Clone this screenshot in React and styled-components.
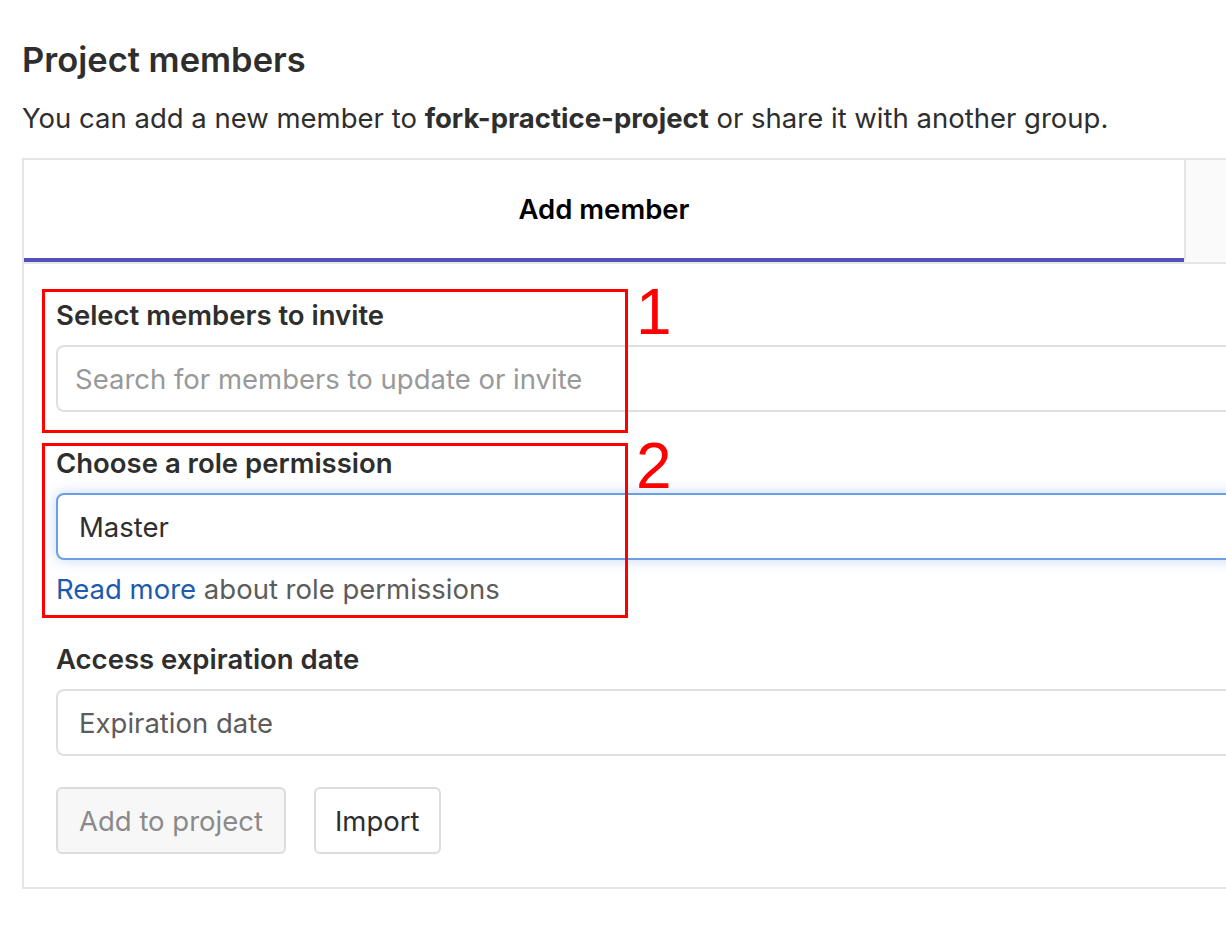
import React from "react";
import styled, { createGlobalStyle } from "styled-components";

const GlobalStyle = createGlobalStyle`
  html, body {
    margin: 0;
    padding: 0;
    background: #ffffff;
    overflow: hidden;
  }
  body {
    font-family: Inter, "Liberation Sans", Arial, sans-serif;
    color: #2e2e2e;
  }
`;

const Page = styled.div`
  padding: 38px 0 0 22px;
  width: 1400px;
`;

const Title = styled.h1`
  margin: 0;
  font-size: 34.5px;
  line-height: 44px;
  font-weight: 600;
  color: #2e2e2e;
`;

const Intro = styled.p`
  margin: 18px 0 0;
  font-size: 27.5px;
  line-height: 36px;
  color: #2e2e2e;

  strong {
    font-weight: 700;
  }
`;

const Card = styled.div`
  margin-top: 22px;
  border: 2px solid #e5e5e5;
  width: 1376px;
`;

const TabBar = styled.div`
  display: flex;
  border-bottom: 2px solid #e5e5e5;
`;

const Tab = styled.div`
  display: flex;
  align-items: center;
  justify-content: center;
  height: 98px;
  font-size: 27.5px;
  font-weight: 600;
  color: #000;
  background: ${(p) => (p.$active ? "#ffffff" : "#fafafa")};
  border-bottom: 4px solid ${(p) => (p.$active ? "#5450ba" : "transparent")};
  ${(p) => (p.$active ? "width: 1160px;" : "flex: 1; border-left: 2px solid #e5e5e5;")}
`;

const Body = styled.div`
  position: relative;
  padding: 36px 32px 33px;
`;

const Group = styled.div`
  margin-bottom: ${(p) => p.$gap || 36}px;
`;

const Label = styled.label`
  display: block;
  font-size: 27.5px;
  line-height: 30px;
  font-weight: 600;
  color: #2e2e2e;
  margin-bottom: 15px;
`;

const Field = styled.div`
  height: 63px;
  border: 2px solid ${(p) => (p.$focus ? "#6a9fe4" : "#dfdfdf")};
  border-radius: 8px;
  display: flex;
  align-items: center;
  padding: 0 ${(p) => (p.$pad ? p.$pad : 21)}px;
  font-size: 27.5px;
  color: ${(p) => p.$color || "#2e2e2e"};
  box-shadow: ${(p) => (p.$focus ? "0 0 14px rgba(90, 145, 225, 0.35)" : "none")};
  background: #fff;
`;

const Help = styled.p`
  margin: 14px 0 0;
  font-size: 27.5px;
  line-height: 30px;
  color: #5c5c5c;

  a {
    color: #1b5cb0;
    text-decoration: none;
  }
`;

const Actions = styled.div`
  display: flex;
  gap: 28px;
`;

const Button = styled.button`
  height: 67px;
  padding: 0 ${(p) => (p.$disabled ? 21 : 19)}px;
  border-radius: 6px;
  border: 2px solid #dcdcdc;
  background: ${(p) => (p.$disabled ? "#f7f7f7" : "#ffffff")};
  color: ${(p) => (p.$disabled ? "#8a8a8a" : "#2e2e2e")};
  font-family: inherit;
  font-size: 27.5px;
`;

const Mark = styled.div`
  position: absolute;
  left: 18px;
  top: ${(p) => p.$top}px;
  width: 580px;
  height: ${(p) => p.$h}px;
  border: 3px solid #ff0000;
`;

const MarkNumber = styled.span`
  position: absolute;
  left: 591px;
  top: -18px;
  font-size: 64px;
  line-height: 76px;
  color: #ff0000;
  font-family: "Liberation Sans", Arial, sans-serif;
`;

export default function App() {
  return (
    <>
      <GlobalStyle />
      <Page>
        <Title>Project members</Title>
        <Intro>
          You can add a new member to <strong>fork-practice-project</strong> or share it with another group.
        </Intro>
        <Card>
          <TabBar>
            <Tab $active>Add member</Tab>
            <Tab />
          </TabBar>
          <Body>
            <Group>
              <Label>Select members to invite</Label>
              <Field $pad={17} $color="#999999">Search for members to update or invite</Field>
            </Group>
            <Group $gap={40}>
              <Label>Choose a role permission</Label>
              <Field $focus>Master</Field>
              <Help>
                <a href="#">Read more</a> about role permissions
              </Help>
            </Group>
            <Group $gap={31}>
              <Label>Access expiration date</Label>
              <Field $color="#5c5c5c">Expiration date</Field>
            </Group>
            <Actions>
              <Button $disabled>Add to project</Button>
              <Button>Import</Button>
            </Actions>
            <Mark $top={25} $h={138}>
              <MarkNumber>1</MarkNumber>
            </Mark>
            <Mark $top={179} $h={169}>
              <MarkNumber>2</MarkNumber>
            </Mark>
          </Body>
        </Card>
      </Page>
    </>
  );
}
